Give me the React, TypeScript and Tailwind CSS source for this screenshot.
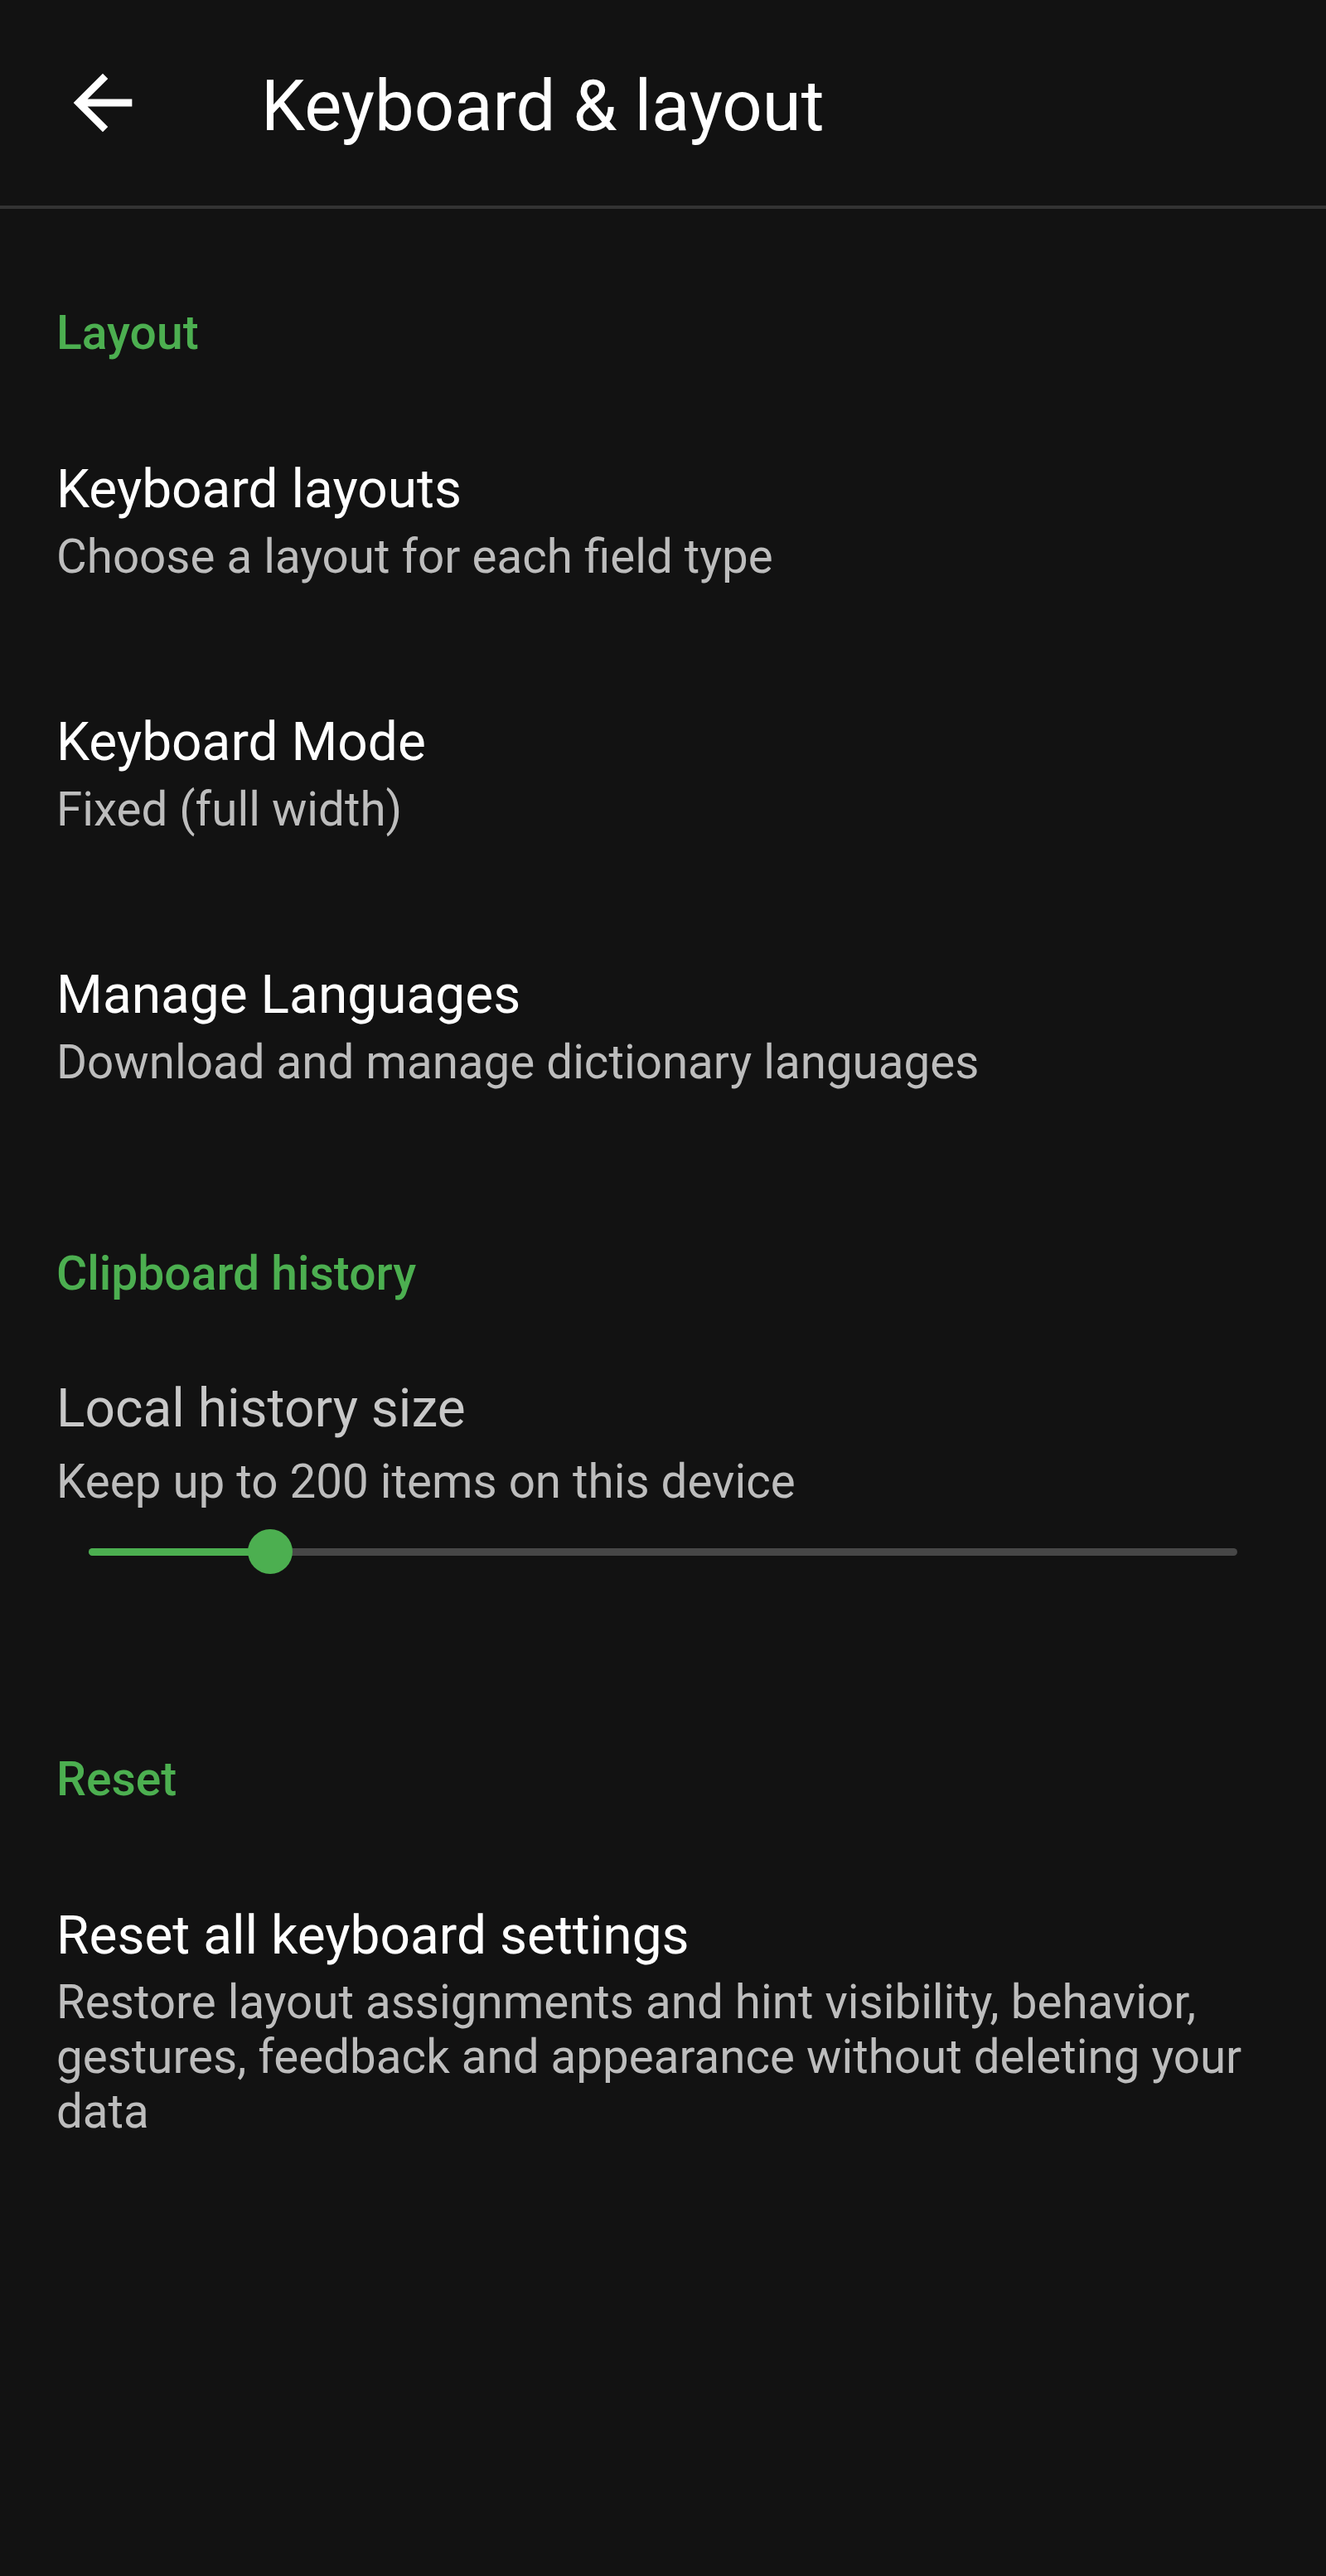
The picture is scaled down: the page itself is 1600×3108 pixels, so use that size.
import React from 'react';

const FONT = "font-['Roboto','Liberation_Sans',sans-serif]";

function CategoryHeader({ label, className = '' }: { label: string; className?: string }) {
  return (
    <div className={`text-[57px] leading-[70px] font-medium text-[#4caf50] ${className}`}>{label}</div>
  );
}

function PrefItem({ title, summary }: { title: string; summary: string }) {
  return (
    <div className="py-[77px]">
      <div className="text-[64px] leading-[76px] text-white">{title}</div>
      <div className="mt-[11px] text-[56.5px] leading-[64px] text-[#bdbdbd]">{summary}</div>
    </div>
  );
}

export default function App() {
  // seek bar position (clipboard history size)
  const pct = 15.8;

  return (
    <div className={`w-[1600px] min-h-[3108px] bg-[#121212] ${FONT}`}>
      {/* Toolbar */}
      <header className="h-[252px] flex items-center border-b-4 border-[#333333] box-border">
        <svg viewBox="0 0 24 24" className="ml-[71px] w-[106px] h-[106px] fill-white shrink-0">
          <path d="M20 11H7.83l5.59-5.59L12 4l-8 8 8 8 1.41-1.41L7.83 13H20v-2z" />
        </svg>
        <h1 className="ml-[138px] mt-2 text-[85px] leading-[100px] font-normal text-white">Keyboard &amp; layout</h1>
      </header>

      <main className="px-[68px]">
        <CategoryHeader label="Layout" className="mt-[115px]" />
        <div className="mt-[39px]">
          <PrefItem title="Keyboard layouts" summary="Choose a layout for each field type" />
          <PrefItem title="Keyboard Mode" summary="Fixed (full width)" />
          <PrefItem title="Manage Languages" summary="Download and manage dictionary languages" />
        </div>

        <CategoryHeader label="Clipboard history" className="mt-[111px]" />
        <div className="mt-[90px] text-[64px] leading-[76px] text-[#c8c8c8]">Local history size</div>
        <div className="mt-[18px] text-[56.5px] leading-[64px] text-[#bdbdbd]">Keep up to 200 items on this device</div>
        <div className="mt-[25px] mx-[39px] h-[54px] relative flex items-center">
          <div className="w-full h-[9px] rounded-full bg-[#474747]" />
          <div className="absolute left-0 h-[9px] rounded-full bg-[#4caf50]" style={{ width: `${pct}%` }} />
          <div
            className="absolute w-[54px] h-[54px] rounded-full bg-[#4caf50] -translate-x-1/2"
            style={{ left: `${pct}%` }}
          />
        </div>

        <CategoryHeader label="Reset" className="mt-[213px]" />
        <div className="mt-[116px] text-[64px] leading-[76px] text-white">Reset all keyboard settings</div>
        <div className="mt-[9px] text-[56.5px] leading-[66px] text-[#bdbdbd]">
          Restore layout assignments and hint visibility, behavior,
          <br />
          gestures, feedback and appearance without deleting your
          <br />
          data
        </div>
      </main>
    </div>
  );
}
